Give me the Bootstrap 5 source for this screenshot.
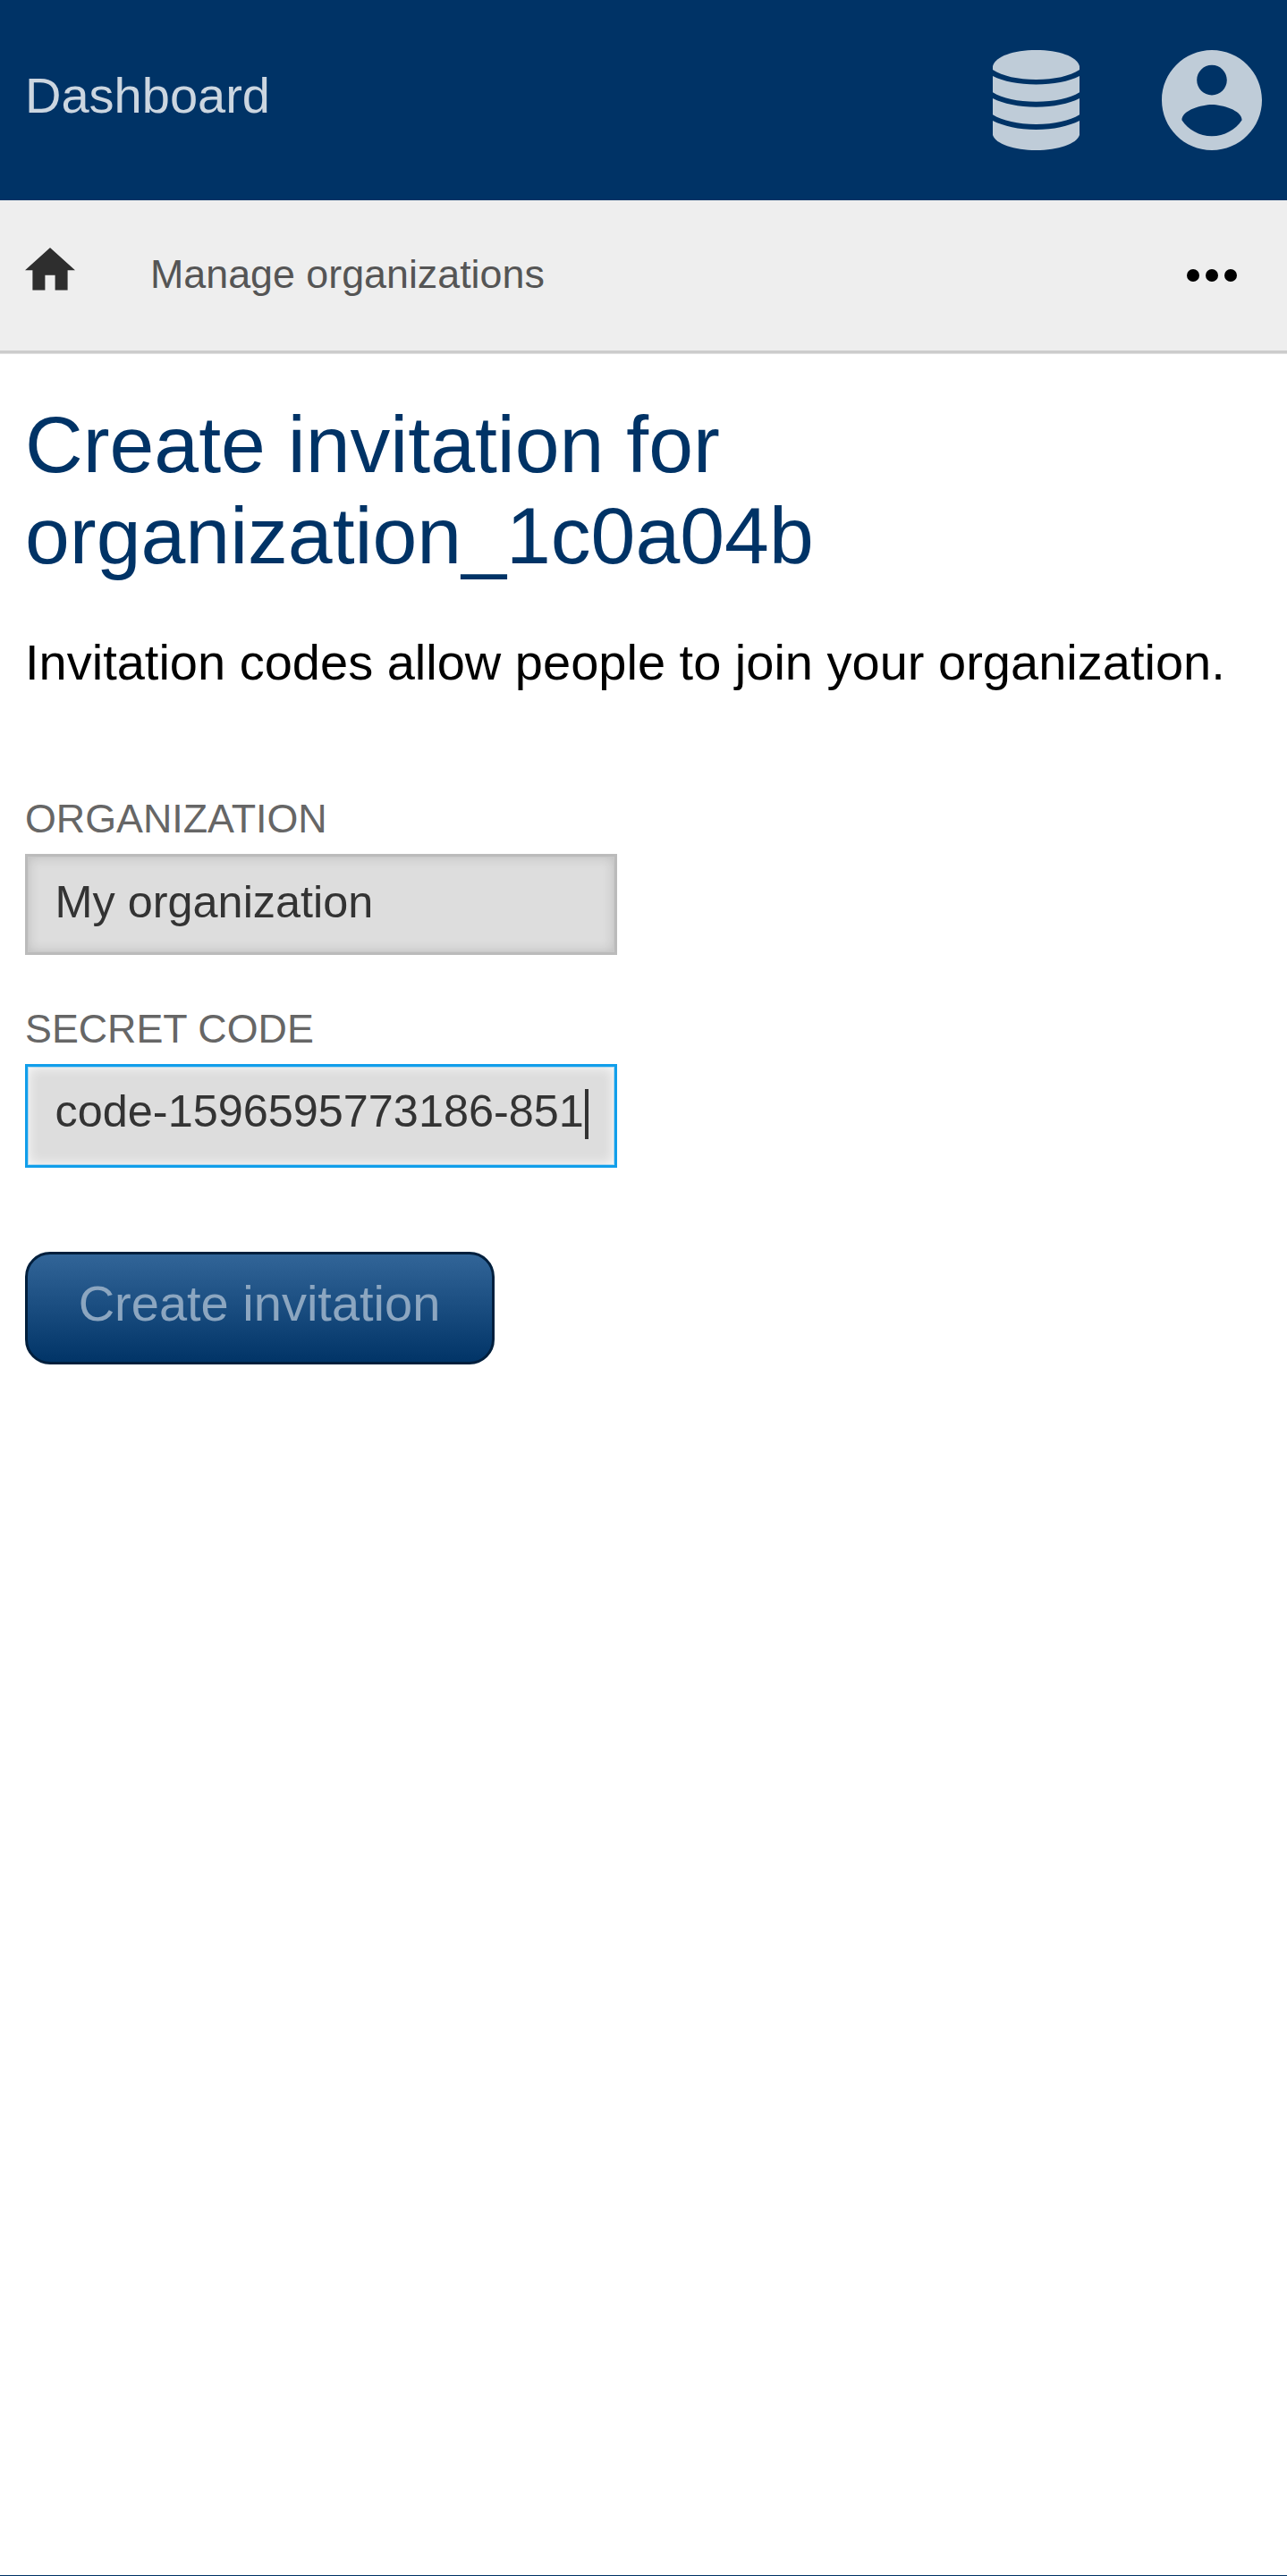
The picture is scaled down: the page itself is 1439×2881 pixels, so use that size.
<!DOCTYPE html>
<html lang="en">
<head>
<meta charset="utf-8">
<meta name="viewport" content="width=device-width, initial-scale=1">
<title>Create invitation</title>
<link href="https://cdn.jsdelivr.net/npm/bootstrap@5.3.0/dist/css/bootstrap.min.css" rel="stylesheet">
<style>
body { font-family: "Liberation Sans", Arial, sans-serif; font-size: 56px; color: #000; background: #fff; min-height: 2881px; border-bottom: 1px solid #003366; }
.topbar { height: 224px; padding: 0 28px; background: #003366; }
.topbar .navbar-brand { font-size: 56px; line-height: 64px; color: #ccd6e0; padding: 0 0 11px; margin: 0; }
.topbar svg { fill: #bfccd8; display: block; }
.topbar-icons { gap: 92px; }
.subbar { height: 171px; padding: 0 56px 3px 28px; background: #eee; border-bottom: 3px solid #ccc; box-shadow: 0 1px 0 #e0e0e0; }
.subbar svg { display: block; }
.home-link { margin-bottom: 11px; margin-right: 84px; color: #2e2e2e; }
.crumb { font-size: 44.8px; line-height: 52px; color: #555; text-decoration: none; margin-bottom: 2px; }
.more-link { margin-top: 3px; }
main { padding: 52px 28px 0; }
h1.page-title { font-size: 89.6px; line-height: 101.5px; font-weight: 400; color: #003366; margin: 0 0 59px; width: 1000px; }
.intro { line-height: 64px; margin: 0 0 116px; white-space: nowrap; }
.form-label { display: block; font-size: 44.8px; line-height: 52px; color: #666; margin: 0 0 14px; text-transform: uppercase; }
.field.form-control { width: 662px; border-radius: 0; background: #ddd; color: #333; font-size: 50.4px; line-height: 56px; white-space: nowrap; }
.field-plain.form-control { height: 113px; border: 3px solid #bbb; padding: 23px 30.6px; box-shadow: inset 0 0 0 1px #c8c8c8, inset 0 0 14px rgba(0,0,0,.16); margin-bottom: 56px; }
.field-active.form-control { height: 116px; border: 3px solid #119eea; padding: 22px 0 0 30.6px; box-shadow: inset 0 0 0 1px rgba(17,158,234,.3), inset 0 0 14px #fff; margin-bottom: 94px; }
.caret { width: 3.5px; height: 56px; background: #333; margin: 3px 0 0 1.3px; }
.btn-create { width: 525px; height: 126px; padding: 0 1px 10px 0; font-size: 56px; line-height: 64px; color: #8ca6c0 !important; border: 3px solid #001f3d !important; border-radius: 28px; background: linear-gradient(#336699, #003366) border-box; opacity: 1 !important; }
</style>
<script src="https://cdn.jsdelivr.net/npm/bootstrap@5.3.0/dist/js/bootstrap.bundle.min.js"></script>
</head>
<body>
<header class="topbar d-flex align-items-center justify-content-between">
  <a class="navbar-brand" href="#">Dashboard</a>
  <div class="topbar-icons d-flex align-items-center">
    <a href="#" aria-label="Storage"><svg width="97" height="112" viewBox="0 0 97 112">
      <path d="M0 18C3 7 23 0 48.5 0S94 7 97 18V22C86 29 69 33 48.5 33S11 29 0 22Z"/>
      <path d="M0 29C12 35 29 38.5 48.5 38.5S85 35 97 29V47.3C86 54 69 57.8 48.5 57.8S11 54 0 47.3Z"/>
      <path d="M0 54C12 60 29 63.7 48.5 63.7S85 60 97 54V72.3C86 79 69 83 48.5 83S11 79 0 72.3Z"/>
      <path d="M0 79C12 85 29 89 48.5 89S85 85 97 79V95C94 105 73 112 48.5 112S3 105 0 95Z"/>
    </svg></a>
    <a href="#" aria-label="Account"><svg width="112" height="112" viewBox="2 2 20 20"><path d="M12 2C6.48 2 2 6.48 2 12s4.480 10 10 10 10-4.480 10-10S17.520 2 12 2zm0 3c1.660 0 3 1.340 3 3s-1.340 3-3 3-3-1.340-3-3 1.340-3 3-3zm0 14.200c-2.500 0-4.710-1.280-6-3.220.03-1.990 4-3.080 6-3.080 1.990 0 5.970 1.090 6 3.080-1.290 1.940-3.500 3.220-6 3.220z"/></svg></a>
  </div>
</header>
<nav class="subbar d-flex align-items-center">
  <a class="home-link" href="#" aria-label="Home"><svg width="56" height="47.6" viewBox="2 3 20 17" fill="currentColor"><path d="M10 20v-6h4v6h5v-8h3L12 3 2 12h3v8z"/></svg></a>
  <a class="crumb" href="#">Manage organizations</a>
  <a class="more-link ms-auto text-black" href="#" aria-label="More"><svg width="56" height="14" viewBox="0 0 56 14" fill="currentColor"><circle cx="7" cy="7" r="7"/><circle cx="28" cy="7" r="7"/><circle cx="49" cy="7" r="7"/></svg></a>
</nav>
<main>
  <h1 class="page-title">Create invitation for organization_1c0a04b</h1>
  <p class="intro">Invitation codes allow people to join your organization.</p>
  <form>
    <label class="form-label">Organization</label>
    <div class="field field-plain form-control">My organization</div>
    <label class="form-label">Secret code</label>
    <div class="field field-active form-control d-flex align-items-start"><span>code-1596595773186-851</span><span class="caret"></span></div>
    <button type="button" class="btn btn-create d-flex align-items-center justify-content-center" disabled>Create invitation</button>
  </form>
</main>
</body>
</html>
